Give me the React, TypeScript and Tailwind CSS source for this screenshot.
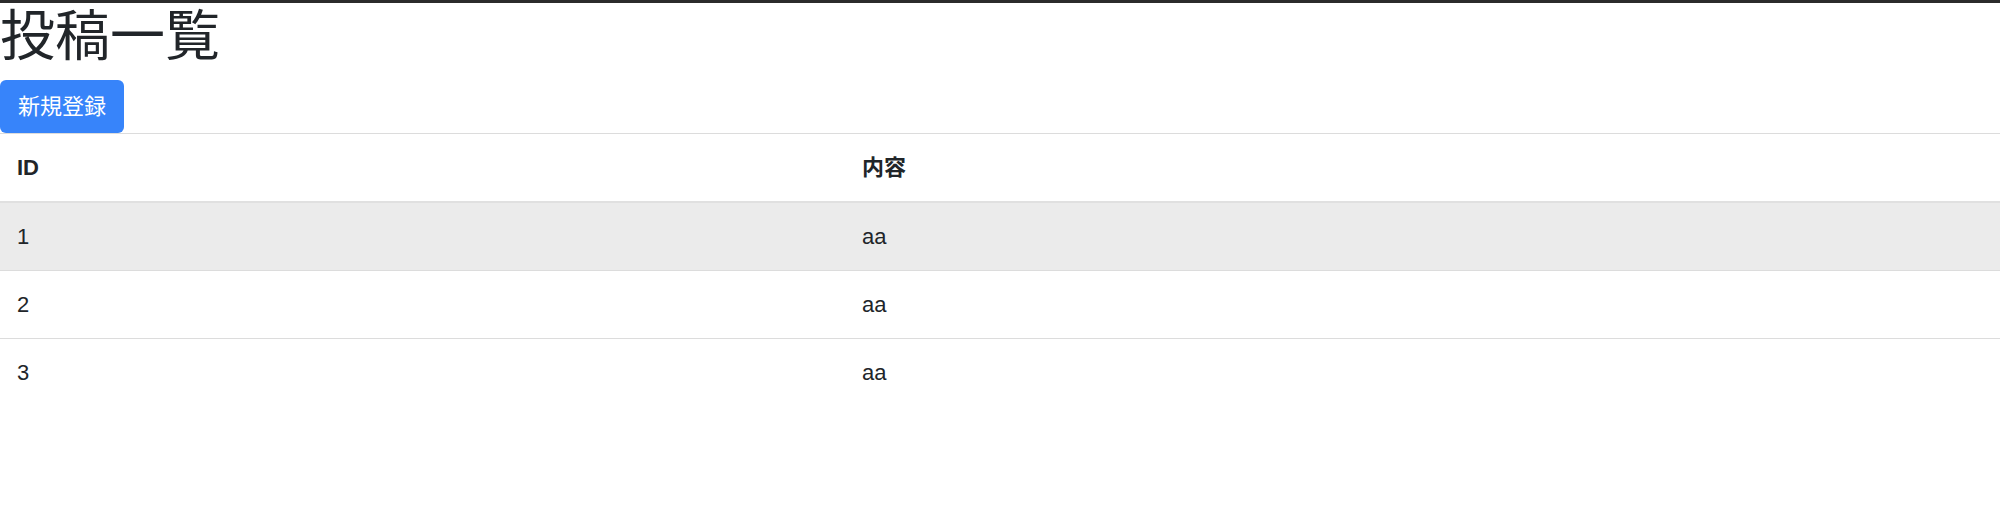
const posts = [
  { id: 1, body: 'aa' },
  { id: 2, body: 'aa' },
  { id: 3, body: 'aa' },
];

export default function App() {
  return (
    <div
      className="w-[2000px] min-h-[514px] bg-white text-[#212529]"
      style={{ fontFamily: '"Liberation Sans", "Noto Sans CJK JP", sans-serif' }}
    >
      <div className="h-[3px] bg-[#2b2b2b]" />

      <h1 className="mb-[11px] h-[66px] text-[55px] font-normal leading-[66px]">
        投稿一覧
      </h1>

      <button className="flex h-[53px] w-[124px] items-center justify-center rounded-md bg-[#3784fa] text-[22px] text-white">
        新規登録
      </button>

      <div className="text-[22px]">
        <div className="grid h-[68px] grid-cols-[845px_1fr] items-center border-t border-[#dcdcdc] font-bold">
          <div className="px-[17px]">ID</div>
          <div className="px-[17px]">内容</div>
        </div>
        <div className="h-[2px] bg-[#e0e0e0]" />
        {posts.map((p, i) => (
          <div
            key={p.id}
            className={
              i === 0
                ? 'grid h-[67px] grid-cols-[845px_1fr] items-center bg-[#ebebeb]'
                : 'grid h-[68px] grid-cols-[845px_1fr] items-center border-t border-[#dcdcdc]'
            }
          >
            <div className="px-[17px]">{p.id}</div>
            <div className="px-[17px]">{p.body}</div>
          </div>
        ))}
      </div>
    </div>
  );
}
